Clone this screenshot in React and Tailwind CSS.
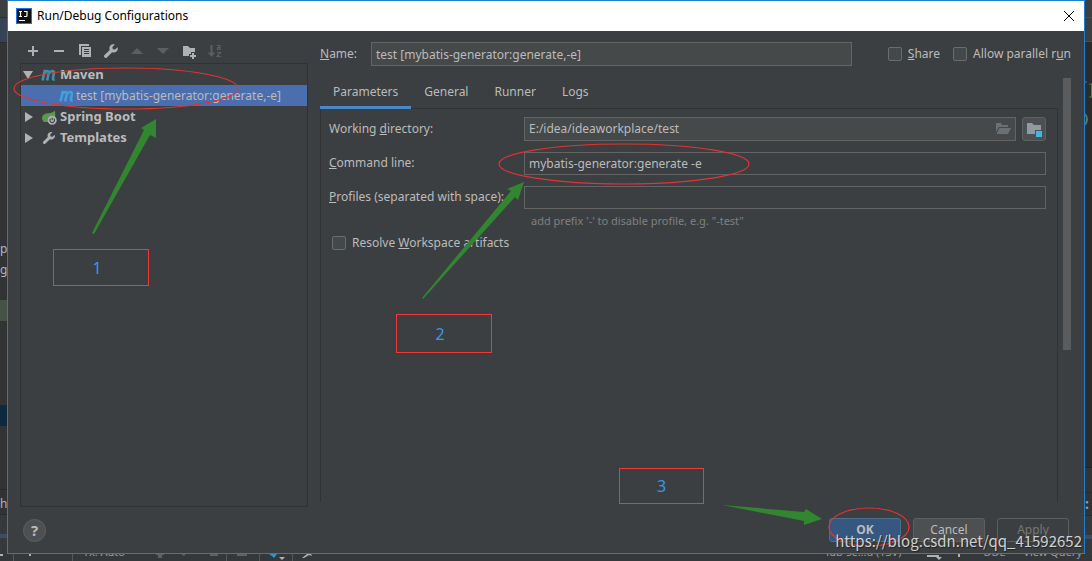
import { useState } from 'react';

const TABS = ['Parameters', 'General', 'Runner', 'Logs'];

function Wrench({ className }) {
  return (
    <svg viewBox="0 0 16 16" className={className} fill="currentColor" aria-hidden="true">
      <path d="M14.6 4.2 12 6.6 9.8 6.2 9.4 4 11.9 1.4C10.3 0.9 8.5 1.3 7.4 2.5 6.3 3.7 6.1 5.4 6.7 6.9L1.3 12.3C0.8 12.8 0.8 13.6 1.3 14.1L1.9 14.7C2.4 15.2 3.2 15.2 3.7 14.7L9.1 9.3C10.6 9.9 12.3 9.6 13.5 8.5 14.7 7.4 15.1 5.7 14.6 4.2Z" />
    </svg>
  );
}

function MavenIcon({ className }) {
  return (
    <svg viewBox="0 0 16 12" className={className} fill="none" stroke="currentColor" strokeWidth="2.6" aria-hidden="true">
      <path d="M3.9 0.8 1.6 11.5M3.4 4.2C4.5 2 8.4 0.8 7.7 4L6.2 11.5M8 4.2C9.2 2 13.7 0.8 13 4L11.9 9C11.7 10.3 12.1 10.6 13.7 10.2" />
    </svg>
  );
}

function SpringIcon() {
  return (
    <svg viewBox="0 0 16 16" className="size-4" aria-hidden="true">
      <path d="M13.5 1.5C12.5 3.5 10 4 7 4.3 3 4.7 1 6.5 1 9.2 1 11 2 12.3 3.3 13L7 13C7 9.5 10 7.5 14 8 14.6 5.6 14.4 3.3 13.5 1.5Z" fill="#5b9a4b" />
      <circle cx="11.2" cy="11.3" r="4.5" fill="#aeb5ba" />
      <path d="M9.6 9.7A2.3 2.3 0 1 0 12.8 9.7M11.2 8.4V11.2" fill="none" stroke="#3c3f41" strokeWidth="1.1" />
    </svg>
  );
}

function Toolbar() {
  const button = 'grid size-4 place-items-center';
  return (
    <div className="flex h-8 items-center gap-[10px] pt-2 pl-[5px] text-[#afb1b3]">
      <button type="button" aria-label="Add" className={button}>
        <svg viewBox="0 0 16 16" className="size-4" fill="currentColor"><path d="M7 3h2v4h4v2H9v4H7V9H3V7h4z" /></svg>
      </button>
      <button type="button" aria-label="Remove" className={button}>
        <svg viewBox="0 0 16 16" className="size-4" fill="currentColor"><path d="M3 7h10v2H3z" /></svg>
      </button>
      <button type="button" aria-label="Copy" className={button}>
        <svg viewBox="0 0 16 16" className="size-4" fill="currentColor">
          <path d="M2 1h10v2H4v9H2z" />
          <path fillRule="evenodd" d="M5 4h9v10H5zM7 6v1h5V6zm0 2v1h5V8zm0 2v1h5v-1z" />
        </svg>
      </button>
      <button type="button" aria-label="Edit templates" className={button}><Wrench className="size-4" /></button>
      <button type="button" aria-label="Move up" className={`${button} text-[#5c5e60]`}>
        <svg viewBox="0 0 16 16" className="size-4" fill="currentColor"><path d="M8 5l6 6H2z" /></svg>
      </button>
      <button type="button" aria-label="Move down" className={`${button} text-[#5c5e60]`}>
        <svg viewBox="0 0 16 16" className="size-4" fill="currentColor"><path d="M8 11l6-6H2z" /></svg>
      </button>
      <button type="button" aria-label="New folder" className={button}>
        <svg viewBox="0 0 16 16" className="size-4" fill="currentColor">
          <path d="M2 3h5l2 2h5v4h-4v2H8v2H2z" />
          <path d="M11 10h2v2h2v2h-2v2h-2v-2H9v-2h2z" />
        </svg>
      </button>
      <button type="button" aria-label="Sort" className={`${button} text-[#5c5e60]`}>
        <svg viewBox="0 0 16 16" className="size-4" fill="none" stroke="currentColor">
          <path d="M4.5 2v9" strokeWidth="2" />
          <path d="M1 9.5h7L4.5 14z" fill="currentColor" stroke="none" />
          <path d="M10 2.5h3v4h-2.5v-2H13M10 9.5h3.500L10 13.5h4" strokeWidth="1.2" />
        </svg>
      </button>
    </div>
  );
}

function Chevron({ open }) {
  return (
    <svg viewBox="0 0 10 10" className="size-[10px] shrink-0" fill="#afb1b3" aria-hidden="true">
      <path d={open ? 'M0 1h10L5 9z' : 'M2 0l8 5-8 5z'} />
    </svg>
  );
}

function TreeRow({ open, icon, children }) {
  return (
    <li className="flex h-[21px] items-center gap-[3px] pl-[2px] text-[13px] font-bold">
      <Chevron open={open} />
      <span className="ml-[5px] grid size-4 shrink-0 place-items-center">{icon}</span>
      {children}
    </li>
  );
}

function Tree() {
  return (
    <ul className="min-h-0 flex-1 border border-[#323232]">
      <TreeRow open icon={<MavenIcon className="h-3 w-4 text-[#3e8fb0]" />}>Maven</TreeRow>
      <li className="flex h-[21px] items-center gap-[1px] bg-[#4b6eaf] pl-[38px]">
        <MavenIcon className="h-3 w-4 shrink-0 text-[#40a0d8]" />
        <span className="whitespace-nowrap">test [mybatis-generator:generate,-e]</span>
      </li>
      <TreeRow icon={<SpringIcon />}>Spring Boot</TreeRow>
      <TreeRow icon={<Wrench className="size-[14px] text-[#afb1b3]" />}>Templates</TreeRow>
    </ul>
  );
}

function Check({ children }) {
  return (
    <label className="flex items-center gap-[6px] whitespace-nowrap">
      <input type="checkbox" className="size-[14px] appearance-none rounded-[2px] border border-[#6b6b6b] bg-[#43494a]" />
      <span>{children}</span>
    </label>
  );
}

function Field({ id, label, children }) {
  return (
    <div className="flex h-6 items-center">
      <label htmlFor={id} className="w-[195px] shrink-0 whitespace-nowrap">{label}</label>
      {children}
    </div>
  );
}

function Parameters() {
  const input = 'h-[23px] w-full min-w-0 border border-[#646464] bg-transparent px-1 outline-none';
  return (
    <div className="mr-[14px] flex min-h-0 flex-1 flex-col border-x border-t border-[#323232] pt-2 pr-[11px] pl-2">
      <div className="flex flex-col gap-[10px]">
        <Field id="dir" label={<>Working <u>d</u>irectory:</>}>
          <div className="flex h-6 flex-1 items-center border border-[#646464] bg-[#45494a] pr-1">
            <input id="dir" defaultValue="E:/idea/ideaworkplace/test" className="min-w-0 flex-1 bg-transparent px-1 outline-none" />
            <button type="button" aria-label="Browse">
              <svg viewBox="0 0 16 16" className="size-4" fill="#6a7073"><path d="M1 2h5l1 2h6v2H4L1 11zM4.5 7H16l-3 6H1.5z" /></svg>
            </button>
          </div>
          <button type="button" aria-label="Insert module directory" className="ml-[6px] grid size-6 place-items-center rounded-[3px] border border-[#5e6060] bg-[#4c5052]">
            <svg viewBox="0 0 16 16" className="size-4">
              <path d="M1 2h5l2 2h7v5H9v4H1z" fill="#8f9ba3" />
              <path d="M10 10h6v6h-6z" fill="#40b6e0" />
            </svg>
          </button>
        </Field>
        <Field id="cmd" label={<><u>C</u>ommand line:</>}>
          <input id="cmd" defaultValue="mybatis-generator:generate -e" className={input} />
        </Field>
        <Field id="profiles" label={<><u>P</u>rofiles (separated with space):</>}>
          <input id="profiles" className={input} />
        </Field>
      </div>
      <p className="mt-1 ml-[202px] text-[11px] leading-[16px] text-[#808080]">add prefix &apos;-&apos; to disable profile, e.g. &quot;-test&quot;</p>
      <div className="mt-[5px] ml-[3px]">
        <Check>Resolve <u>W</u>orkspace artifacts</Check>
      </div>
    </div>
  );
}

function Editor() {
  const [tab, setTab] = useState('Parameters');
  return (
    <section className="flex min-w-0 flex-1 flex-col">
      <div className="flex items-center pt-[11px]">
        <label htmlFor="name" className="w-[51px] shrink-0"><u>N</u>ame:</label>
        <input id="name" defaultValue="test [mybatis-generator:generate,-e]" className="h-6 min-w-0 flex-1 border border-[#646464] bg-[#45494a] px-1 outline-none" />
        <div className="ml-9 flex gap-[13px]">
          <Check><u>S</u>hare</Check>
          <Check>Allow parallel r<u>u</u>n</Check>
        </div>
      </div>
      <div className="mt-3 flex min-h-0 flex-1">
        <div className="flex min-h-0 min-w-0 flex-1 flex-col">
          <div role="tablist" className="relative z-10 flex h-[30px]">
            {TABS.map((t) => (
              <button
                key={t}
                type="button"
                role="tab"
                aria-selected={t === tab}
                onClick={() => setTab(t)}
                className={`h-[31px] border-b-3 px-[13px] ${t === tab ? 'border-[#4a88c7]' : 'border-transparent'}`}
              >
                {t}
              </button>
            ))}
          </div>
          <Parameters />
        </div>
        <div className="-ml-[9px] h-[272px] w-2 shrink-0 bg-[#5a5c5d]" />
      </div>
    </section>
  );
}

function Dialog() {
  const button = 'h-6 w-[72px] rounded-[3px] border';
  return (
    <main className="flex min-w-0 flex-1 flex-col border border-[#1a80d0] bg-[#3c3f41] text-[12px] text-[#bbbbbb]">
      <header className="flex h-[30px] shrink-0 items-center bg-white pr-[9px] pl-2 text-black">
        <svg viewBox="0 0 16 16" className="size-4" aria-hidden="true">
          <path d="M0 0h16v16H0z" fill="#1a75d8" />
          <path d="M1 1h14v14H1z" fill="#111" />
          <path d="M3 3.5h3M4.5 3.5v5M3 8.5h3M8 3.5h3v4q0 1-1 1H8M3 12.5h6" fill="none" stroke="#fff" strokeWidth="1.2" />
        </svg>
        <h1 className="ml-[5px] flex-1">Run/Debug Configurations</h1>
        <button type="button" aria-label="Close">
          <svg viewBox="0 0 12 12" className="size-3" stroke="#000" fill="none"><path d="M1 1l10 10M11 1L1 11" /></svg>
        </button>
      </header>
      <div className="flex min-h-0 flex-1 gap-3 pr-[13px] pl-3">
        <aside className="flex w-[288px] shrink-0 flex-col">
          <Toolbar />
          <Tree />
        </aside>
        <div className="flex min-w-0 flex-1 pb-[5px]">
          <Editor />
        </div>
      </div>
      <footer className="flex h-[46px] shrink-0 items-center gap-3 pr-[15px] pl-[15px]">
        <button type="button" aria-label="Help" className="size-[23px] rounded-full border border-[#5e6060] bg-[#4c5052] text-[15px] leading-[20px] font-bold">?</button>
        <div className="flex-1" />
        <button type="button" className={`${button} border-[#4c708c] bg-[#365880] font-bold`}>OK</button>
        <button type="button" className={`${button} border-[#5e6060] bg-[#4c5052]`}>Cancel</button>
        <button type="button" disabled className={`${button} border-[#5e6060] text-[#777777]`}>Apply</button>
      </footer>
    </main>
  );
}

// slices of the IDE window that stay visible around the dialog
function LeftEdge() {
  return (
    <div className="flex w-[7px] shrink-0 flex-col overflow-hidden bg-[#313335] text-[12px] leading-[21px] text-[#a9b7c6]">
      <div className="h-[17px] bg-[#3c3f41]" />
      <div className="h-[25px] border-t border-[#2b2b2b] bg-[#364355]" />
      <div className="h-[196px] border-t border-[#2b2b2b]" />
      <div>p</div>
      <div>g</div>
      <div className="mt-5 h-[21px] bg-[#465245]" />
      <div className="mt-[84px] h-[21px] bg-[#0d293e]" />
      <div className="mt-[63px] h-[26px] border-y border-[#292929] leading-[28px]">he</div>
      <div className="h-[19px] bg-[#36393b]" />
      <div className="h-1 bg-[#3d4b63]" />
      <div className="flex-1 bg-[#36393b]" />
    </div>
  );
}

function RightEdge() {
  return (
    <div className="flex w-[7px] shrink-0 flex-col overflow-hidden bg-[#2b2b2b] text-[12px]">
      <div className="h-[17px] bg-[#3c3f41]" />
      <div className="h-[25px] border-y border-[#4a4c4e] bg-[#3c3f41]" />
      <svg viewBox="0 0 7 90" className="mt-9 h-[90px] w-[7px]" fill="none" stroke="#5d7a4d" aria-hidden="true">
        <path d="M4 6h2.5v13M4 19h3M1 3v2" />
        <path d="M0 36q4 5 0 11" strokeWidth="2" />
      </svg>
      <div className="flex-1" />
      <div className="h-[25px] border-t border-[#222222] bg-[#313335]" />
      <div className="h-6 border-y border-[#292929] bg-[#313335] text-[14px] leading-[22px] font-bold text-[#9a9c9e]">:</div>
      <div className="h-[19px] bg-[#36393b]" />
      <div className="h-1 bg-[#3d4b63]" />
      <div className="h-[15px] bg-[#36393b]" />
    </div>
  );
}

function BottomEdge() {
  return (
    <div className="flex h-[7px] shrink-0 items-end overflow-hidden bg-[#35383a] pr-[10px] text-[11px] leading-[18px] text-[#9a9c9e]">
      <svg viewBox="0 0 83 7" className="h-[7px] w-[83px] shrink-0" aria-hidden="true">
        <path d="M0 0h3v2H0zM29 0h2v2h-2z" fill="#afb1b3" />
        <path d="M13.5 0v7M72.5 0v7" stroke="#55585a" />
      </svg>
      <span>Tx: Auto</span>
      <svg viewBox="0 0 200 7" className="ml-[30px] h-[7px] w-[200px]" aria-hidden="true">
        <path d="M1 0h8v1H7v3H3V1H1zM26 0h5l-2 2zM55 0h8v2h-8zM82 0h10v2H82z" fill="#5f6163" />
        <path d="M71.5 0v7M104.5 0v7M137.5 0v7" stroke="#55585a" />
        <path d="M114 0h8l-3 4-2-2z" fill="#3592c4" />
        <path d="M124 3h6l-3 3zM147 4l5-4h4l1 2-3-1-5 3z" fill="#afb1b3" />
      </svg>
      <div className="flex-1" />
      <span>Tab-se...d (TSV)</span>
      <svg viewBox="0 0 60 7" className="mx-[11px] h-[7px] w-[60px]" aria-hidden="true">
        <path d="M15 1h12v2H15zM24 3h6l-3 3zM46 0h2v3h-2z" fill="#afb1b3" />
      </svg>
      <span>DDL</span>
      <span className="ml-[18px]">View Query</span>
    </div>
  );
}

function Annotations() {
  const box = 'absolute grid place-items-center border border-[#f03a3a] text-[16px] text-[#3c96e6]';
  return (
    <div className="pointer-events-none absolute inset-0">
      <svg viewBox="0 0 1092 561" className="absolute top-0 left-0 h-[561px] w-[1092px]" aria-hidden="true">
        <g fill="none" stroke="#e23434" strokeWidth="1.2">
          <ellipse cx="126" cy="88.5" rx="112" ry="20.5" />
          <ellipse cx="624" cy="164" rx="125" ry="20" />
          <ellipse cx="869" cy="527" rx="40" ry="19" />
        </g>
        <g fill="#31862f">
          <path d="M92 233 144 130 141 128 156 119 156 138 150 135 94 234z" />
          <path d="M422 298 511 191 507 189 524 182 518 200 515 197 423 299z" />
          <path d="M722 505 804 512 806 509 822 519 804 525 804 521z" />
        </g>
      </svg>
      <div className={`${box} top-[249px] left-[53px] h-[37px] w-24 pr-2`}>1</div>
      <div className={`${box} top-[314px] left-[396px] h-[39px] w-24 pr-2`}>2</div>
      <div className={`${box} top-[468px] left-[619px] h-9 w-[85px]`}>3</div>
      <div className="absolute right-[10px] bottom-[10px] text-[15px] leading-[20px] text-[#d0d1d2] [font-family:'Noto_Sans_CJK_SC',sans-serif] [text-shadow:1px_1px_1px_#222]">https://blog.csdn.net/qq_41592652</div>
    </div>
  );
}

export default function App() {
  return (
    <div className="relative flex h-screen flex-col overflow-hidden bg-[#2b2b2b] [font-family:'Noto_Sans','Open_Sans',sans-serif]">
      <div className="flex min-h-0 flex-1">
        <LeftEdge />
        <Dialog />
        <RightEdge />
      </div>
      <BottomEdge />
      <Annotations />
    </div>
  );
}
